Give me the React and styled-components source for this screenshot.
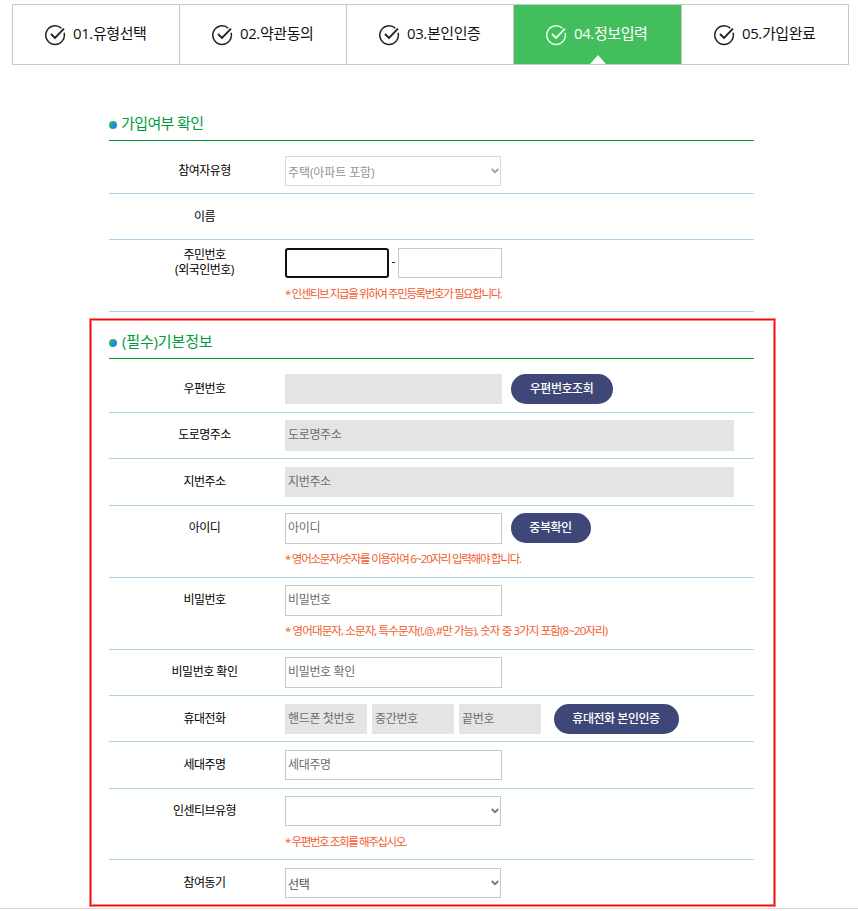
import React from "react";
import styled, { createGlobalStyle } from "styled-components";

const GlobalStyle = createGlobalStyle`
	* {
		box-sizing: border-box;
	}

	body {
		margin: 0;
		background: #fff;
		color: #000;
		font-family: "Open Sans", "Noto Sans CJK KR", sans-serif;
		font-size: 12px;
	}
`;

const Page = styled.div`
	height: 909px;
	padding-top: 4px;
	border-bottom: 1px solid #d9d9d9;
	overflow: hidden;
`;

const StepList = styled.ol`
	display: grid;
	grid-template-columns: 167px 167px 167px 168px 167px;
	width: 837px;
	height: 61px;
	margin: 0 0 0 12px;
	padding: 0;
	list-style: none;
	border: 1px solid #c8c8c8;
	border-right: 0;
`;

const StepItem = styled.li`
	position: relative;
	display: flex;
	align-items: center;
	padding: 0 0 5px 31px;
	font-size: 15px;
	letter-spacing: -0.4px;
	white-space: nowrap;
	border-right: 1px solid #c8c8c8;
	color: ${(props) => (props.$active ? "#fff" : "#111")};
	background: ${(props) => (props.$active ? "#42be5c" : "#fff")};

	svg {
		flex: none;
		margin: 5px 7px 0 0;
		color: ${(props) => (props.$active ? "#e9ffe9" : "#222")};
	}

	&::after {
		content: "";
		display: ${(props) => (props.$active ? "block" : "none")};
		position: absolute;
		left: 76px;
		bottom: 0;
		border: 8px solid transparent;
		border-top: 0;
		border-bottom: 9px solid #fff;
	}
`;

const Section = styled.section`
	width: 645px;
	margin-left: 109px;
	padding-top: 46px;
`;

const Frame = styled.div`
	width: 687px;
	height: 589px;
	margin: 6px 0 0 89px;
	border: 1px solid #ff8585;
	box-shadow: inset 0 0 0 1px #e80c14, inset 0 0 0 2px #ff8585;

	${Section} {
		margin-left: 19px;
		padding-top: 10px;
	}
`;

const Title = styled.h2`
	display: flex;
	align-items: center;
	height: 30px;
	margin: 0;
	padding-bottom: 7px;
	font-size: 15px;
	font-weight: 400;
	letter-spacing: ${(props) => props.$track || -0.6}px;
	color: #009a3d;
	border-bottom: 1px solid #009a3d;

	&::before {
		content: "";
		width: 8px;
		height: 8px;
		margin: 5px ${(props) => props.$gap || 4}px 0 0;
		border-radius: 50%;
		background: linear-gradient(135deg, #35b56b 25%, #1590dc 60%);
	}
`;

const Row = styled.div`
	display: grid;
	grid-template-columns: 176px 1fr;
	align-content: start;
	height: ${(props) => props.$h}px;
	padding-top: ${(props) => props.$top || 7}px;
	border-bottom: ${(props) => (props.$last ? 0 : "1px solid #b0d2e6")};
`;

const Label = styled.div`
	padding-left: 15px;
	line-height: 30px;
	letter-spacing: -0.5px;
	text-align: center;
	white-space: nowrap;
`;

const DoubleLabel = styled(Label)`
	margin-top: -1px;
	line-height: 15px;
`;

const Fields = styled.div`
	display: flex;
	align-items: flex-start;
`;

const Input = styled.input`
	width: ${(props) => props.$w || 217}px;
	height: ${(props) => props.$h || 30}px;
	margin: 0 ${(props) => props.$gap || 0}px 0 0;
	padding: 0 2px 2px;
	font: inherit;
	letter-spacing: -0.35px;
	border: 1px solid #c8c8c8;
	border-radius: 0;
	outline: 0;
	background: #fff;

	&::placeholder {
		color: #6c6c6c;
		opacity: 1;
	}

	&:disabled {
		border-color: #e4e4e4;
		background: #e4e4e4;
	}
`;

const FocusedInput = styled(Input)`
	border: 2px solid #101010;
	border-radius: 3px;
`;

const Dash = styled.span`
	width: 9px;
	line-height: 28px;
	text-align: center;
`;

const SelectBox = styled.div`
	display: flex;
	align-items: center;
	justify-content: space-between;
	width: 216px;
	height: 30px;
	padding: 1px 1px 0 2px;
	letter-spacing: ${(props) => (props.$muted ? -0.1 : -0.35)}px;
	color: ${(props) => (props.$muted ? "#949494" : "#505050")};
	border: 1px solid ${(props) => (props.$muted ? "#dadada" : "#c8c8c8")};

	svg {
		margin: 0 0 1px auto;
		color: ${(props) => (props.$muted ? "#a0a0a0" : "#777")};
	}
`;

const Button = styled.button`
	width: ${(props) => props.$w}px;
	height: 30px;
	padding: 0 1px 2px 0;
	font: inherit;
	font-weight: 500;
	letter-spacing: -0.45px;
	color: #fff;
	background: #3f4778;
	border: 0;
	border-radius: 15px;
	white-space: nowrap;
`;

const Hint = styled.p`
	grid-column: 2;
	margin: ${(props) => props.$mt || 7}px 0 0;
	line-height: 18px;
	font-size: 11.5px;
	letter-spacing: ${(props) => props.$track || -1.4}px;
	color: #f25a2a;
	white-space: nowrap;
`;

function CheckIcon() {
	return (
		<svg width="22" height="22" viewBox="0 0 22 22" fill="none" stroke="currentColor" strokeWidth="1.5">
			<path d="M17.4 4.3A9.3 9.3 0 1 0 20.1 8.8" />
			<path d="M7 10l4 4L20 4.6" strokeWidth="1.9" />
		</svg>
	);
}

function Chevron() {
	return (
		<svg width="8" height="6" viewBox="0 0 8 6" fill="none" stroke="currentColor" strokeWidth="1.8">
			<path d="M0.7 1l3.3 3.2L7.3 1" />
		</svg>
	);
}

const steps = ["01.유형선택", "02.약관동의", "03.본인인증", "04.정보입력", "05.가입완료"];

function App() {
	return (
		<>
			<GlobalStyle />
			<Page>
				<StepList>
					{steps.map((step, i) => (
						<StepItem key={step} $active={i === 3}>
							<CheckIcon />
							{step}
						</StepItem>
					))}
				</StepList>

				<Section>
					<Title>가입여부 확인</Title>
					<Row $h={53} $top={15}>
						<Label>참여자유형</Label>
						<SelectBox $muted>
							주택(아파트 포함)
							<Chevron />
						</SelectBox>
					</Row>
					<Row $h={46} $top={8}>
						<Label>이름</Label>
					</Row>
					<Row $h={72} $top={8}>
						<DoubleLabel>
							주민번호
							<br />
							(외국인번호)
						</DoubleLabel>
						<Fields>
							<FocusedInput $w={104} />
							<Dash>-</Dash>
							<Input $w={104} />
						</Fields>
						<Hint>* 인센티브 지급을 위하여 주민등록번호가 필요합니다.</Hint>
					</Row>
				</Section>

				<Frame>
					<Section>
						<Title $track={-0.15} $gap={5}>
							(필수)기본정보
						</Title>
						<Row $h={54} $top={15}>
							<Label>우편번호</Label>
							<Fields>
								<Input disabled $gap={9} />
								<Button $w={102}>우편번호조회</Button>
							</Fields>
						</Row>
						<Row $h={46}>
							<Label>도로명주소</Label>
							<Input disabled placeholder="도로명주소" $w={449} $h={31} />
						</Row>
						<Row $h={47} $top={8}>
							<Label>지번주소</Label>
							<Input disabled placeholder="지번주소" $w={449} />
						</Row>
						<Row $h={72}>
							<Label>아이디</Label>
							<Fields>
								<Input placeholder="아이디" $h={31} $gap={9} />
								<Button $w={80}>중복확인</Button>
							</Fields>
							<Hint $mt={6} $track={-1.25}>
								* 영어소문자/숫자를 이용하여 6~20자리 입력해야 합니다.
							</Hint>
						</Row>
						<Row $h={72}>
							<Label>비밀번호</Label>
							<Input placeholder="비밀번호" $h={31} />
							<Hint $mt={6} $track={-0.88}>
								* 영어대문자, 소문자, 특수문자(!,@,#만 가능), 숫자 중 3가지 포함(8~20자리)
							</Hint>
						</Row>
						<Row $h={46}>
							<Label>비밀번호 확인</Label>
							<Input placeholder="비밀번호 확인" $h={31} />
						</Row>
						<Row $h={46} $top={8}>
							<Label>휴대전화</Label>
							<Fields>
								<Input disabled placeholder="핸드폰 첫번호" $w={82} $gap={5} />
								<Input disabled placeholder="중간번호" $w={82} $gap={5} />
								<Input disabled placeholder="끝번호" $w={82} $gap={13} />
								<Button $w={125}>휴대전화 본인인증</Button>
							</Fields>
						</Row>
						<Row $h={47} $top={8}>
							<Label>세대주명</Label>
							<Input placeholder="세대주명" />
						</Row>
						<Row $h={71}>
							<Label>인센티브유형</Label>
							<SelectBox>
								<Chevron />
							</SelectBox>
							<Hint>* 우편번호 조회를 해주십시오.</Hint>
						</Row>
						<Row $h={44} $top={8} $last>
							<Label>참여동기</Label>
							<SelectBox>
								선택
								<Chevron />
							</SelectBox>
						</Row>
					</Section>
				</Frame>
			</Page>
		</>
	);
}

export default App;
